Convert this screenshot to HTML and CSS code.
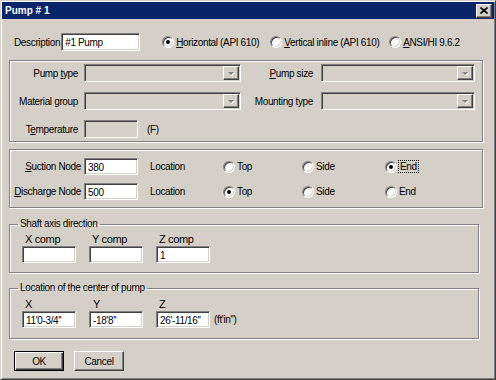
FILE: index.html
```html
<!DOCTYPE html>
<html lang="en">
<head>
    <meta charset="UTF-8">
    <title>Pump # 1</title>
    <link rel="stylesheet" href="styles.css">
</head>
<body>
    <div class="window">
        <div class="titlebar">
            <span class="title">Pump # 1</span>
            <span class="close-btn">
                <svg width="8" height="7" viewBox="0 0 8 7"><path d="M0.5 0.5 L7.5 6.5 M7.5 0.5 L0.5 6.5" stroke="#000" stroke-width="1.6"/></svg>
            </span>
        </div>

        <div class="content">
            <div class="desc-row">
                <span class="desc-label">Description</span>
                <div class="field desc-field">#1 Pump</div>
                <span class="opt opt-h"><span class="radio checked"></span><span><u>H</u>orizontal (API 610)</span></span>
                <span class="opt opt-v"><span class="radio"></span><span><u>V</u>ertical inline (API 610)</span></span>
                <span class="opt"><span class="radio"></span><span><u>A</u>NSI/HI 9.6.2</span></span>
            </div>

            <div class="group group-pump">
                <span class="lbl">Pump <u>t</u>ype</span>
                <div class="combo"><span class="combo-btn"><span class="arrow"></span></span></div>
                <span class="lbl lbl-2"><u>P</u>ump size</span>
                <div class="combo"><span class="combo-btn"><span class="arrow"></span></span></div>

                <span class="lbl">Material group</span>
                <div class="combo"><span class="combo-btn"><span class="arrow"></span></span></div>
                <span class="lbl lbl-2">Mounting type</span>
                <div class="combo"><span class="combo-btn"><span class="arrow"></span></span></div>

                <span class="lbl">T<u>e</u>mperature</span>
                <div class="temp-row">
                    <div class="field disabled temp-field"></div>
                    <span>(F)</span>
                </div>
            </div>

            <div class="group group-nodes">
                <span class="lbl"><u>S</u>uction Node</span>
                <div class="field node-field">380</div>
                <span class="loc">Location</span>
                <span class="opt"><span class="radio"></span><span>Top</span></span>
                <span class="opt"><span class="radio"></span><span>Side</span></span>
                <span class="opt"><span class="radio checked"></span><span class="focus">End</span></span>

                <span class="lbl"><u>D</u>ischarge Node</span>
                <div class="field node-field">500</div>
                <span class="loc">Location</span>
                <span class="opt"><span class="radio checked"></span><span>Top</span></span>
                <span class="opt"><span class="radio"></span><span>Side</span></span>
                <span class="opt"><span class="radio"></span><span>End</span></span>
            </div>

            <fieldset class="group group-axis">
                <legend>Shaft axis direction</legend>
                <div class="coords">
                    <span class="coord-lbl">X comp</span>
                    <span class="coord-lbl">Y comp</span>
                    <span class="coord-lbl">Z comp</span>
                    <span></span>
                    <div class="field coord-field"></div>
                    <div class="field coord-field"></div>
                    <div class="field coord-field">1</div>
                    <span></span>
                </div>
            </fieldset>

            <fieldset class="group group-center">
                <legend>Location of the center of pump</legend>
                <div class="coords">
                    <span class="coord-lbl">X</span>
                    <span class="coord-lbl coord-y">Y</span>
                    <span class="coord-lbl">Z</span>
                    <span></span>
                    <div class="field coord-field">11'0-3/4''</div>
                    <div class="field coord-field">-18'8''</div>
                    <div class="field coord-field">26'-11/16''</div>
                    <span class="unit">(ft'in'')</span>
                </div>
            </fieldset>

            <div class="buttons">
                <span class="btn btn-default">OK</span>
                <span class="btn">Cancel</span>
            </div>
        </div>
    </div>
</body>
</html>
```

FILE: styles.css
```css
body {
    margin: 0;
    background: #d4d0c8;
    font-family: "Liberation Sans", Arial, sans-serif;
    font-size: 10px;
    letter-spacing: -0.35px;
    color: #000;
    white-space: nowrap;
}
.window {
    width: 496px;
    height: 380px;
    box-sizing: border-box;
    background: #d4d0c8;
    border: 1px solid;
    border-color: #d4d0c8 #404040 #404040 #d4d0c8;
    box-shadow: inset 1px 1px #fff, inset -1px -1px #808080;
    padding: 1px;
    overflow: hidden;
}
.titlebar {
    height: 17px;
    background: #0a246a;
    color: #fff;
    display: flex;
    align-items: center;
    justify-content: space-between;
    padding: 0 2px 0 3px;
}
.title {
    font-weight: bold;
    font-size: 10px;
    letter-spacing: 0;
}
.close-btn {
    width: 14px;
    height: 12px;
    background: #d4d0c8;
    border: 1px solid;
    border-color: #fff #404040 #404040 #fff;
    box-shadow: inset -1px -1px #808080;
    display: flex;
    align-items: center;
    justify-content: center;
}
.content {
    padding: 0 11px 0 7px;
}

/* sunken edit box */
.field {
    box-sizing: border-box;
    height: 17px;
    background: #fff;
    border: 1px solid;
    border-color: #808080 #fff #fff #808080;
    box-shadow: inset 1px 1px #404040, inset -1px -1px #d4d0c8;
    padding: 2px 3px 0;
    line-height: 13px;
    overflow: hidden;
}
.field.disabled {
    background: #d4d0c8;
}

.radio {
    display: inline-block;
    box-sizing: border-box;
    width: 12px;
    height: 12px;
    border-radius: 50%;
    background: #fff;
    border: 1px solid;
    border-color: #808080 #fff #fff #808080;
    box-shadow: inset 1px 1px #404040, inset -1px -1px #d4d0c8;
    position: relative;
    flex-shrink: 0;
}
.radio.checked::after {
    content: "";
    position: absolute;
    left: 3px;
    top: 3px;
    width: 4px;
    height: 4px;
    border-radius: 50%;
    background: #000;
}
.opt {
    display: flex;
    align-items: center;
    gap: 2px;
    padding-left: 1px;
}

.desc-row {
    display: flex;
    align-items: center;
    margin-top: 14px;
    height: 18px;
}
.desc-label {
    margin-left: 5px;
    margin-right: 1px;
}
.desc-field {
    width: 79px;
    height: 18px;
    margin-right: 21px;
}
.opt-h {
    width: 107px;
}
.opt-v {
    width: 118px;
}

.group {
    border: 1px solid #808080;
    box-shadow: inset 1px 1px #fff, 1px 1px #fff;
}
.lbl {
    text-align: right;
    padding-right: 6px;
}

.group-pump {
    margin-top: 9px;
    display: grid;
    grid-template-columns: 74px 157px 80px 154px;
    grid-auto-rows: 18px;
    row-gap: 10px;
    align-items: center;
    padding: 3px 0 3px;
}
.group-pump .lbl-2 {
    padding-right: 8px;
}
.combo {
    box-sizing: border-box;
    height: 18px;
    background: #d4d0c8;
    border: 1px solid;
    border-color: #808080 #fff #fff #808080;
    box-shadow: inset 1px 1px #404040, inset -1px -1px #d4d0c8;
    display: flex;
    justify-content: flex-end;
    padding: 1px;
}
.combo-btn {
    width: 14px;
    height: 12px;
    border: 1px solid;
    border-color: #fff #404040 #404040 #fff;
    box-shadow: inset -1px -1px #808080;
    display: flex;
    align-items: center;
    justify-content: center;
}
.arrow {
    width: 0;
    height: 0;
    border-left: 3px solid transparent;
    border-right: 3px solid transparent;
    border-top: 3px solid #808080;
    filter: drop-shadow(1px 1px 0 #fff);
}
.temp-row {
    display: flex;
    align-items: center;
    gap: 9px;
}
.temp-field {
    width: 54px;
    height: 18px;
}

.group-nodes {
    margin-top: 7px;
    display: grid;
    grid-template-columns: 74px 54px 84px 79px 83px auto;
    grid-auto-rows: 17px;
    row-gap: 8px;
    align-items: center;
    padding: 8px 0 7px;
}
.group-nodes .lbl {
    padding-right: 3px;
}
.loc {
    padding-left: 12px;
}
.focus {
    outline: 1px dotted #000;
    outline-offset: 0;
    padding: 0 1px;
}

fieldset.group {
    margin: 0 4px 0 0;
    padding: 0 0 9px 12px;
    min-width: 0;
}
legend {
    padding: 0 2px;
    margin-left: -4px;
    line-height: 12px;
}
.group-axis {
    margin-top: 10px !important;
}
.group-center {
    margin-top: 9px !important;
    padding-bottom: 10px !important;
}
.coords {
    display: grid;
    grid-template-columns: 54px 54px 54px auto;
    column-gap: 13px;
    row-gap: 1px;
    align-items: center;
    padding-top: 3px;
}
.group-center .coords {
    padding-top: 4px;
}
.coord-lbl {
    padding-left: 3px;
    line-height: 12px;
    font-size: 11px;
}
.coord-y {
    padding-left: 4px;
}
.coord-field {
    height: 17px;
}
.unit {
    margin-left: -9px;
}

.buttons {
    display: flex;
    gap: 10px;
    margin: 12px 0 0 5px;
}
.btn {
    box-sizing: border-box;
    width: 50px;
    height: 20px;
    border: 1px solid;
    border-color: #fff #404040 #404040 #fff;
    box-shadow: inset -1px -1px #808080;
    display: flex;
    align-items: center;
    justify-content: center;
}
.btn-default {
    border-color: #000;
    box-shadow: inset 1px 1px #fff, inset -1px -1px #404040, inset -2px -2px #808080;
}
```
